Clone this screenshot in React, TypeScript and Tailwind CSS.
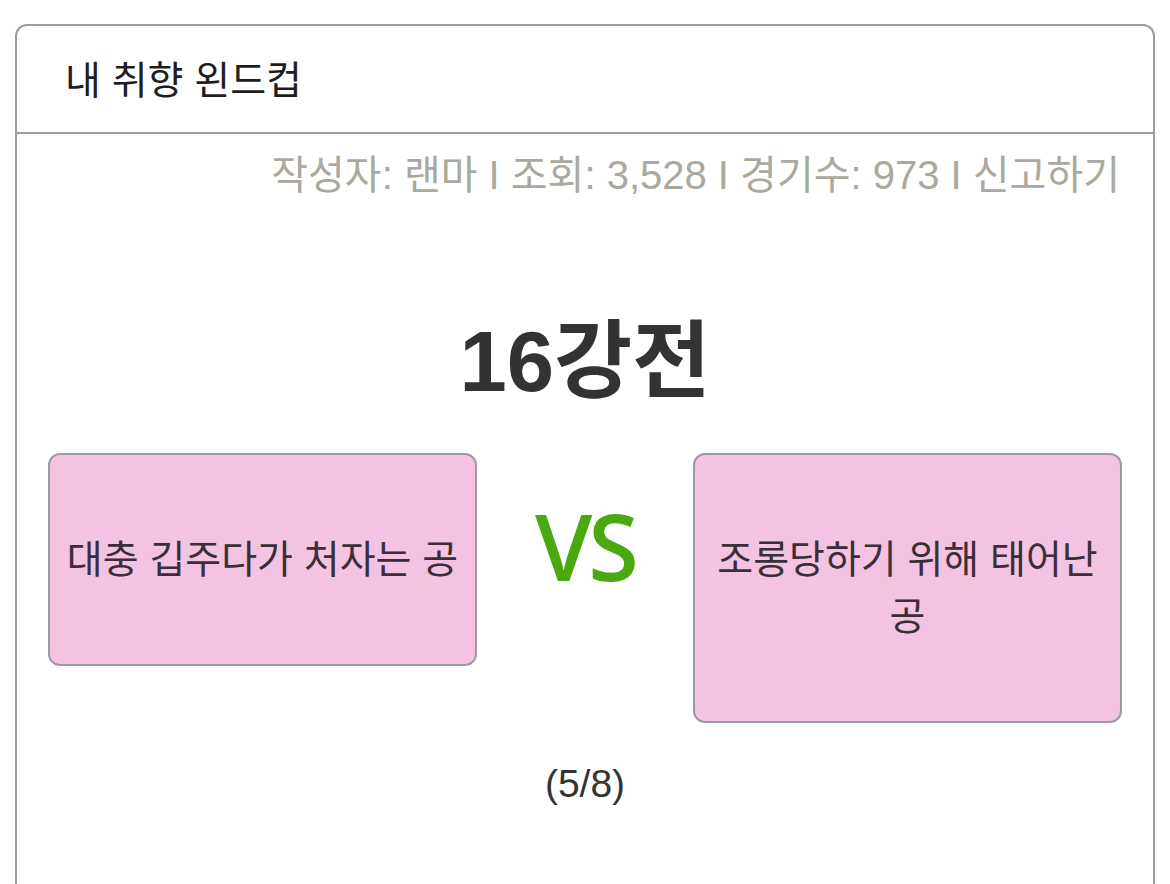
const font = { fontFamily: '"Liberation Sans", "Noto Sans CJK KR", sans-serif' };

function Candidate({ label }: { label: string }) {
  return (
    <div className="w-[429px] shrink-0 rounded-[12px] border-2 border-[#9c9aa6] bg-[#f4c3e1] px-3 py-[76px] text-center text-[39px] leading-[57px] text-[#3a2f37]">
      {label}
    </div>
  );
}

export default function App() {
  return (
    <div className="min-h-screen bg-white pt-[24px]" style={font}>
      <div className="mx-[15px] overflow-hidden rounded-[12px] border-2 border-[#9a9ca4] bg-white">
        {/* Header */}
        <div className="flex h-[108px] items-center border-b-2 border-[#9a9ca4] pl-[48px] pt-[4px] text-[39px] text-[#1e1e1e]">
          내 취향 왼드컵
        </div>

        {/* Meta */}
        <div className="pr-[33px] pt-[17px] text-right text-[40px] leading-[48px] text-[#a9a99d]">
          작성자: 랜마 I 조회: 3,528 I 경기수: 973 I 신고하기
        </div>

        {/* Round */}
        <h1 className="mt-[120px] text-center text-[85px] font-bold leading-none text-[#333]">16강전</h1>

        {/* Match */}
        <div className="mt-[49px] flex items-start justify-between px-[31px]">
          <Candidate label="대충 깁주다가 처자는 공" />
          <div
            className="mt-[47px] text-[92px] font-semibold leading-none tracking-[-4px] text-[#4aa810]"
            style={{ fontFamily: '"Open Sans", sans-serif' }}
          >
            VS
          </div>
          <Candidate label="조롱당하기 위해 태어난 공" />
        </div>

        <div className="mt-[37px] pb-[120px] text-center text-[39px] leading-[48px] text-[#333]">(5/8)</div>
      </div>
    </div>
  );
}
